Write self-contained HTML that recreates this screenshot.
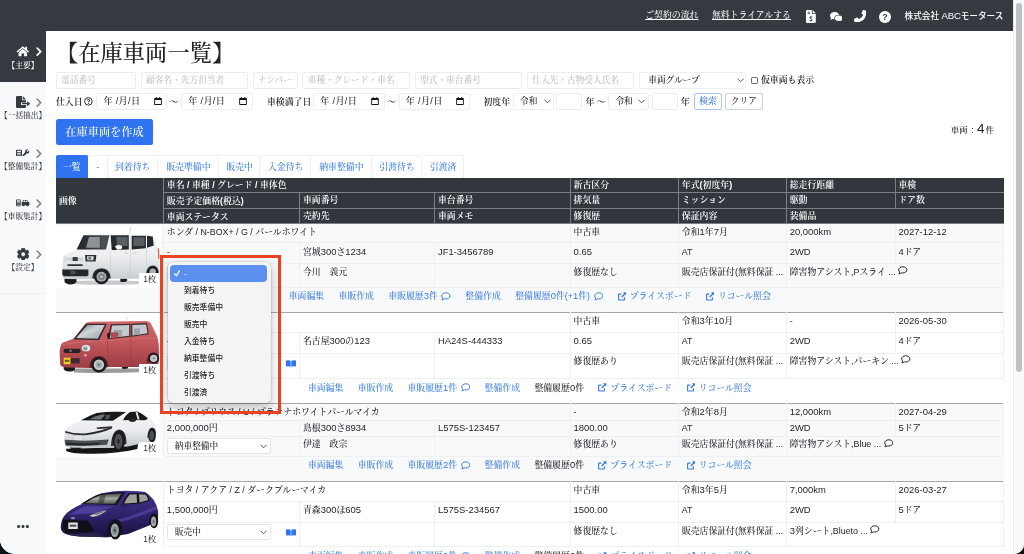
<!DOCTYPE html>
<html lang="ja"><head><meta charset="utf-8"><title>在庫車両一覧</title>
<style>
html,body{margin:0;padding:0}
body{width:1024px;height:554px;overflow:hidden;background:#0a1216;font-family:"Liberation Sans","Noto Serif CJK SC",serif;font-size:9.1px;line-height:13.65px;color:#212529;position:relative;font-weight:500}
*{box-sizing:border-box}
#win{position:absolute;left:0;top:0;width:1024px;height:554px;background:#fff;border-radius:0 0 10px 15px;overflow:hidden}
#lay{position:absolute;left:0;top:0;width:1024px;height:554px;will-change:transform}
.abs{position:absolute}
#hdr{position:absolute;left:0;top:0;width:1013px;height:31px;background:#343a40;color:#fff}
#hdr a{position:absolute;top:9px;color:#fff;text-decoration:underline;font-size:8.9px;line-height:13px;white-space:nowrap}
#hdr .co{position:absolute;top:9.2px;left:904.5px;font-family:"Liberation Sans","Noto Sans CJK JP",sans-serif;font-size:8.65px;line-height:13px;white-space:nowrap;color:#fff}
#hdr svg{position:absolute}
#side{position:absolute;left:0;top:31px;width:46px;height:523px;background:#f8f9fa}
#side .act{position:absolute;left:0;top:0;width:46px;height:50.5px;background:#343a40}
.si{position:absolute;left:0;width:46px;text-align:center;font-size:7.7px;line-height:10px;color:#343a40;white-space:nowrap}
.si.w{color:#fff}
.si svg{position:absolute}
#sb{position:absolute;left:1013px;top:0;width:11px;height:554px;background:#fafafa;border-left:1px solid #e9e9e9}
#sb i{position:absolute;left:2.4px;top:2.7px;width:6px;height:369.3px;border-radius:3px;background:#c1c1c1}
h1{position:absolute;left:55.9px;top:37.2px;margin:0;font-size:22.3px;line-height:34px;font-weight:500;white-space:nowrap;color:#212529}
.inp{position:absolute;height:17.5px;border:1px solid #eaedf0;border-radius:2px;background:#fff;font-size:8.7px;line-height:15.5px;color:#bcc1c6;padding:0 4.5px;white-space:nowrap;overflow:hidden}
.inp.d{color:#212529;border-color:#eceef1}
.inp.dt{font-size:9.1px;letter-spacing:.35px;padding-left:6.2px}
.lbl{position:absolute;white-space:nowrap;font-size:8.9px;line-height:16px;color:#212529;font-weight:600}
.btn{position:absolute;border:1px solid #ccd2d8;border-radius:2px;font-size:8.7px;line-height:14px;text-align:center;height:16.5px;background:#fff}
#mk{position:absolute;left:56px;top:119px;width:97px;height:26px;background:#2f73f0;border-radius:2.5px;color:#fff;font-size:11.2px;line-height:26px;text-align:center}
.tab{position:absolute;top:155px;height:22.5px;border:1px solid #eef0f2;border-left-color:transparent;border-bottom:none;border-radius:2px 2px 0 0;color:#3b7ddd;font-size:8.9px;line-height:22px;text-align:center;background:#fff;white-space:nowrap}
.tab.on{background:#2f73f0;color:#fff;border-color:#2f73f0}
table{position:absolute;left:56px;top:177.6px;width:947.5px;border-collapse:collapse;table-layout:fixed;font-size:8.87px;line-height:12px}
.n{font-size:9.45px}
th,td{padding:0 3px;text-align:left;vertical-align:top;white-space:nowrap;overflow:hidden;border:0.7px solid #eef0f2}
thead th{background:#32373e;color:#fff;font-weight:600;border:0.7px solid #7b8088;font-size:8.9px;padding-top:1.5px;padding-bottom:0}
thead tr:first-child th{border-top:none}
thead th:first-child{border-left:none;vertical-align:middle}
thead th:last-child{border-right:none}
tbody.s td{background:#f8f9fb}
tbody td{padding-top:calc(var(--pt) - 6.3px)}
tbody tr:first-child td{border-top:1px solid #a4a8ad}
tbody tr:nth-child(3) td:first-child{padding-top:1.4px}
td.img{padding:0;position:relative;border-left:none;border-bottom:none}
td.img svg.car{position:absolute;left:0;top:0.5px}
td.lk{text-align:center;border:none;color:#212529;font-size:8.9px;padding-top:2.8px !important}
td.lk a{color:#3b7ddd;text-decoration:none}
td.lk>span,td.lk>a{margin:0 7.15px}
td.lk svg{vertical-align:-1.5px}
td.lk svg.cm{margin-left:1.2px}
.bd{position:absolute;left:82.5px;bottom:-0.3px;width:22.5px;height:14.3px;background:#fff;font-size:8.5px;line-height:13.8px;text-align:center;color:#333}
.sel{display:inline-block;width:104px;height:16.2px;border:1px solid #e2e6ea;border-radius:2px;background:#fff;font-size:8.7px;line-height:14.5px;padding-left:7px;position:relative;vertical-align:top}
.sel svg{position:absolute;right:3px;top:5px}
#red{position:absolute;left:160.2px;top:254.8px;width:121.2px;height:159.3px;border:3.4px solid #e8421f}
#pop{position:absolute;left:168px;top:262px;width:103px;height:140.5px;background:#f4f4f4;border-radius:5px;box-shadow:0 0 0 .5px rgba(0,0,0,.16),0 4px 12px rgba(0,0,0,.26);font-family:"Liberation Sans","Noto Sans CJK JP",sans-serif;font-size:7.8px;line-height:17px;color:#262626}
#pop div{position:absolute;left:16px;white-space:nowrap}
#pop .hi{left:2.2px;top:2.6px;width:97.2px;height:17px;background:#5b90ee;border-radius:4px}
</style></head>
<body><div id="win"><div id="lay">
<div id="hdr"><a style="left:645.2px">ご契約の流れ</a><a style="left:712px">無料トライアルする</a><svg style="position:absolute;left:806.2px;top:9.7px;" width="9.8" height="13" viewBox="0 0 9.8 13"><path fill="#fff" d="M0 1.2 Q0 0 1.2 0 H5.8 V3.2 Q5.8 3.9 6.5 3.9 H9.8 V11.8 Q9.8 13 8.6 13 H1.2 Q0 13 0 11.8z"/><path fill="#fff" d="M6.6 0 L9.8 3.2 H6.6z"/><path fill="#343a40" d="M1.6 1.7 H4 V2.4 H1.6z M1.6 3.3 H4 V4 H1.6z"/><path fill="none" stroke="#343a40" stroke-width="0.9" d="M6.3 7.3 Q4.9 6.6 3.9 7.2 Q3.2 8.2 4.9 8.8 Q6.6 9.3 5.9 10.4 Q4.9 11 3.5 10.3 M4.9 5.9 V6.9 M4.9 10.7 V11.7"/></svg><svg style="position:absolute;left:829.6px;top:11.6px;" width="12.9" height="9.6" viewBox="0 0 12.9 9.6"><ellipse cx="4.6" cy="3.6" rx="4.6" ry="3.6" fill="#fff"/><path fill="#fff" d="M1.2 5.5 L0.3 7.9 L3.4 6.8z"/><ellipse cx="8.6" cy="6.2" rx="4.3" ry="3.3" fill="#343a40"/><ellipse cx="8.6" cy="6.2" rx="3.7" ry="2.8" fill="#fff"/><path fill="#fff" d="M11.2 8 L12.5 9.6 L9.6 8.8z"/></svg><svg style="position:absolute;left:854.2px;top:10px;transform:scaleX(-1) rotate(90deg);" width="12.4" height="12.4" viewBox="0 0 12.4 12.4"><path fill="#fff" d="M11.9 0.6 L9.4 0 Q8.9 -0.1 8.7 0.4 L7.5 3.1 Q7.4 3.5 7.7 3.8 L9.2 5 Q7.9 7.8 5 9.2 L3.8 7.7 Q3.5 7.4 3.1 7.5 L0.4 8.7 Q-0.1 8.9 0 9.4 L0.6 11.9 Q0.7 12.4 1.2 12.4 Q12.4 12.4 12.4 1.2 Q12.4 0.7 11.9 0.6z"/></svg><svg style="position:absolute;left:879.4px;top:10.6px;" width="12" height="12" viewBox="0 0 12 12"><circle cx="6" cy="6" r="6" fill="#fff"/><text x="6" y="9.1" text-anchor="middle" font-family="Liberation Sans,sans-serif" font-weight="700" font-size="8.8" fill="#343a40">?</text></svg><span class="co">株式会社 <span style="font-size:9.6px;letter-spacing:-.15px">ABC</span>モータース</span></div>
<div id="side"><div class="act"></div><svg style="position:absolute;left:16.2px;top:15.3px;" width="13.6" height="10.4" viewBox="0 30 576 470"><path fill="#fff" d="M288 36 L14 262 c-8 7-9 18-2 26 l22 26 c7 8 18 9 26 2 L288 128 l228 188 c8 7 19 6 26-2 l22-26 c7-8 6-19-2-26 L480 194 V72 c0-7-5-12-12-12 h-56 c-7 0-12 5-12 12 v56z"/><path fill="#fff" d="M288 168 L96 326 V480 c0 9 7 16 16 16 h116 V372 h120 v124 h116 c9 0 16-7 16-16 V326z"/></svg><svg style="position:absolute;left:36.3px;top:16.4px;" width="6" height="9.2" viewBox="0 0 6 9.2"><path fill="none" stroke="#fff" stroke-width="1.7" stroke-linecap="round" stroke-linejoin="round" d="M1.2 1.1 L4.7 4.6 L1.2 8.1"/></svg><div class="si w" style="top:29.5px">【主要】</div><svg style="position:absolute;left:16.2px;top:65px;" width="14.4" height="12" viewBox="0 0 14.4 12"><path fill="#343a40" d="M0 1.2 Q0 0 1.2 0 H6 V3.6 Q6 4.2 6.6 4.2 H10 V6.4 H5.6 Q5 6.4 5 7 V8.4 Q5 9 5.6 9 H10 V10.8 Q10 12 8.8 12 H1.2 Q0 12 0 10.8z"/><path fill="#343a40" d="M6.8 0 L10 3.4 H6.8z"/><path fill="#343a40" d="M6 7.1 H11 V5.2 L14.4 7.7 L11 10.2 V8.3 H6z"/></svg><svg style="position:absolute;left:36.3px;top:66.80000000000001px;" width="6" height="9.2" viewBox="0 0 6 9.2"><path fill="none" stroke="#8a8d90" stroke-width="1.7" stroke-linecap="round" stroke-linejoin="round" d="M1.2 1.1 L4.7 4.6 L1.2 8.1"/></svg><div class="si" style="top:79.9px">【一括抽出】</div><svg style="position:absolute;left:16.2px;top:117.7px;" width="13.5" height="7.7" viewBox="0 0 15 8.6"><path fill="#343a40" d="M0.6 0.8 H6 Q6.6 0.8 6.6 1.4 V7.6 Q6.6 8.2 6 8.2 H0.6 Q0 8.2 0 7.6 V1.4 Q0 0.8 0.6 0.8z M1.2 2 V3.6 H5.4 V2z M1.2 4.6 V5.4 H5.4 V4.6z M1.2 6.2 V7 H5.4 V6.2z" fill-rule="evenodd"/><path fill="#343a40" d="M14.6 1.6 L12.9 3.3 L11.8 2.2 L13.5 0.5 Q11.9 0 10.8 1.1 Q9.9 2.1 10.3 3.3 L7.2 6.9 Q6.7 7.6 7.3 8.2 Q7.9 8.7 8.5 8.2 L12 5 Q13.3 5.4 14.2 4.4 Q15.2 3.3 14.6 1.6z"/></svg><svg style="position:absolute;left:36.3px;top:118.30000000000001px;" width="6" height="9.2" viewBox="0 0 6 9.2"><path fill="none" stroke="#8a8d90" stroke-width="1.7" stroke-linecap="round" stroke-linejoin="round" d="M1.2 1.1 L4.7 4.6 L1.2 8.1"/></svg><div class="si" style="top:131.4px">【整備集計】</div><svg style="position:absolute;left:16.2px;top:168.2px;" width="13.5" height="7.7" viewBox="0 0 15 8.6"><path fill="#343a40" d="M0.6 0.6 H4.6 Q5.2 0.6 5.2 1.2 V7.4 Q5.2 8 4.6 8 H0.6 Q0 8 0 7.4 V1.2 Q0 0.6 0.6 0.6z M0.9 1.5 V3 H4.3 V1.5z M0.9 3.8 V4.6 H1.9 V3.8z M2.1 3.8 V4.6 H3.1 V3.8z M3.3 3.8 V4.6 H4.3 V3.8z M0.9 5.2 V6 H1.9 V5.2z M2.1 5.2 V6 H3.1 V5.2z M3.3 5.2 V6 H4.3 V5.2z M0.9 6.6 V7.2 H4.3 V6.6z" fill-rule="evenodd"/><path fill="#343a40" d="M6.2 4.2 Q6.2 3.6 6.9 3.5 L7.8 1.6 Q8.1 1 8.8 1 H11.6 Q12.2 1 12.6 1.5 L13.9 3.4 Q15 3.6 15 4.6 V6.4 Q15 6.9 14.5 6.9 H14.1 A1.3 1.3 0 0 1 11.5 6.9 H9.6 A1.3 1.3 0 0 1 7 6.9 H6.7 Q6.2 6.9 6.2 6.4z M8.1 3.4 H10 V1.8 H8.9z M10.7 3.4 H12.9 L11.8 1.8 H10.7z" fill-rule="evenodd"/><circle fill="#343a40" cx="8.3" cy="7" r="0.95"/><circle fill="#343a40" cx="12.8" cy="7" r="0.95"/></svg><svg style="position:absolute;left:36.3px;top:168.1px;" width="6" height="9.2" viewBox="0 0 6 9.2"><path fill="none" stroke="#8a8d90" stroke-width="1.7" stroke-linecap="round" stroke-linejoin="round" d="M1.2 1.1 L4.7 4.6 L1.2 8.1"/></svg><div class="si" style="top:181.2px">【車販集計】</div><svg style="position:absolute;left:16.8px;top:216.5px;" width="12.4" height="12.4" viewBox="0 0 12.4 12.4"><path fill="#343a40" fill-rule="evenodd" stroke="#343a40" stroke-width="0.6" stroke-linejoin="round" d="M12.15 7.93 L10.68 10.49 L8.97 9.87 L7.99 10.44 L7.67 12.22 L4.73 12.22 L4.41 10.44 L3.43 9.87 L1.72 10.49 L0.25 7.93 L1.64 6.77 L1.64 5.63 L0.25 4.47 L1.72 1.91 L3.43 2.53 L4.41 1.96 L4.73 0.18 L7.67 0.18 L7.99 1.96 L8.97 2.53 L10.68 1.91 L12.15 4.47 L10.76 5.63 L10.76 6.77z M6.2 4 A2.2 2.2 0 1 0 6.2 8.4 A2.2 2.2 0 1 0 6.2 4z"/></svg><svg style="position:absolute;left:36.3px;top:219.20000000000002px;" width="6" height="9.2" viewBox="0 0 6 9.2"><path fill="none" stroke="#8a8d90" stroke-width="1.7" stroke-linecap="round" stroke-linejoin="round" d="M1.2 1.1 L4.7 4.6 L1.2 8.1"/></svg><div class="si" style="top:232.3px">【設定】</div><div class="abs" style="left:0;top:262px;width:46px;height:1px;background:#eef0f2"></div><svg style="position:absolute;left:17.2px;top:493.9px;" width="12" height="3.2" viewBox="0 0 12 3.2"><circle cx="1.6" cy="1.6" r="1.5" fill="#343a40"/><circle cx="6" cy="1.6" r="1.5" fill="#343a40"/><circle cx="10.4" cy="1.6" r="1.5" fill="#343a40"/></svg></div>
<div id="sb"><i></i></div>
<h1>【在庫車両一覧】</h1>
<div class="inp " style="left:55.5px;top:71.5px;width:80.5px">電話番号</div><div class="inp " style="left:140.5px;top:71.5px;width:107px">顧客名・先方担当者</div><div class="inp " style="left:252.5px;top:71.5px;width:45px">ナンバー</div><div class="inp " style="left:302.3px;top:71.5px;width:107.4px">車種・グレード・車名</div><div class="inp " style="left:414.5px;top:71.5px;width:107px">型式・車台番号</div><div class="inp " style="left:526.7px;top:71.5px;width:107px">仕入先・古物受人氏名</div><div class="inp d" style="left:638.6px;top:71.5px;width:107px;padding-left:8.6px">車両グループ</div><svg style="position:absolute;left:736.5px;top:78.2px;" width="7.2" height="5" viewBox="0 0 7.2 5"><path fill="none" stroke="#444" stroke-width="0.9" stroke-linecap="round" stroke-linejoin="round" d="M0.8 1 L3.6 3.8 L6.4 1"/></svg><div class="abs" style="left:751px;top:76.6px;width:7.2px;height:7.2px;border:1px solid #6b6b6b;border-radius:1.2px;background:#fff"></div><div class="lbl" style="left:761px;top:72.3px">仮車両も表示</div>
<div class="lbl" style="left:56px;top:93.5px">仕入日</div><svg style="position:absolute;left:83.8px;top:97.3px;" width="8.8" height="8.8" viewBox="0 0 8.8 8.8"><circle cx="4.4" cy="4.4" r="3.8" fill="none" stroke="#212529" stroke-width="0.95"/><text x="4.4" y="6.7" text-anchor="middle" font-family="Liberation Sans,sans-serif" font-weight="700" font-size="6.4" fill="#212529">?</text></svg><div class="inp d dt" style="left:96.2px;top:92.8px;width:70.9px">年 /月/日</div><svg style="position:absolute;left:153.70000000000002px;top:97.39999999999999px;" width="8" height="8" viewBox="0 0 8 8"><path fill="#111" fill-rule="evenodd" d="M0.9 0.9 H7.1 Q7.8 0.9 7.8 1.6 V7.3 Q7.8 8 7.1 8 H0.9 Q0.2 8 0.2 7.3 V1.6 Q0.2 0.9 0.9 0.9z M1.1 2.9 V7.1 H6.9 V2.9z"/><path fill="#111" d="M1.8 0 H2.7 V1.4 H1.8z M5.3 0 H6.2 V1.4 H5.3z"/></svg><div class="lbl" style="left:169.6px;top:93.5px">～</div><div class="inp d dt" style="left:181px;top:92.8px;width:71.5px">年 /月/日</div><svg style="position:absolute;left:239.1px;top:97.39999999999999px;" width="8" height="8" viewBox="0 0 8 8"><path fill="#111" fill-rule="evenodd" d="M0.9 0.9 H7.1 Q7.8 0.9 7.8 1.6 V7.3 Q7.8 8 7.1 8 H0.9 Q0.2 8 0.2 7.3 V1.6 Q0.2 0.9 0.9 0.9z M1.1 2.9 V7.1 H6.9 V2.9z"/><path fill="#111" d="M1.8 0 H2.7 V1.4 H1.8z M5.3 0 H6.2 V1.4 H5.3z"/></svg><div class="lbl" style="left:267px;top:93.5px">車検満了日</div><div class="inp d dt" style="left:313px;top:92.8px;width:71.8px">年 /月/日</div><svg style="position:absolute;left:371.40000000000003px;top:97.39999999999999px;" width="8" height="8" viewBox="0 0 8 8"><path fill="#111" fill-rule="evenodd" d="M0.9 0.9 H7.1 Q7.8 0.9 7.8 1.6 V7.3 Q7.8 8 7.1 8 H0.9 Q0.2 8 0.2 7.3 V1.6 Q0.2 0.9 0.9 0.9z M1.1 2.9 V7.1 H6.9 V2.9z"/><path fill="#111" d="M1.8 0 H2.7 V1.4 H1.8z M5.3 0 H6.2 V1.4 H5.3z"/></svg><div class="lbl" style="left:387.2px;top:93.5px">～</div><div class="inp d dt" style="left:398.5px;top:92.8px;width:71.3px">年 /月/日</div><svg style="position:absolute;left:456.40000000000003px;top:97.39999999999999px;" width="8" height="8" viewBox="0 0 8 8"><path fill="#111" fill-rule="evenodd" d="M0.9 0.9 H7.1 Q7.8 0.9 7.8 1.6 V7.3 Q7.8 8 7.1 8 H0.9 Q0.2 8 0.2 7.3 V1.6 Q0.2 0.9 0.9 0.9z M1.1 2.9 V7.1 H6.9 V2.9z"/><path fill="#111" d="M1.8 0 H2.7 V1.4 H1.8z M5.3 0 H6.2 V1.4 H5.3z"/></svg><div class="lbl" style="left:483.5px;top:93.5px">初度年</div><div class="inp d" style="left:512.7px;top:92.8px;width:41.3px;padding-left:6.4px">令和</div><svg style="position:absolute;left:543.5px;top:99.39999999999999px;" width="7.2" height="5" viewBox="0 0 7.2 5"><path fill="none" stroke="#444" stroke-width="0.9" stroke-linecap="round" stroke-linejoin="round" d="M0.8 1 L3.6 3.8 L6.4 1"/></svg><div class="inp " style="left:556.4px;top:92.8px;width:26px"></div><div class="lbl" style="left:585.5px;top:93.5px">年 ～</div><div class="inp d" style="left:608px;top:92.8px;width:40.6px;padding-left:6.4px">令和</div><svg style="position:absolute;left:638.3px;top:99.39999999999999px;" width="7.2" height="5" viewBox="0 0 7.2 5"><path fill="none" stroke="#444" stroke-width="0.9" stroke-linecap="round" stroke-linejoin="round" d="M0.8 1 L3.6 3.8 L6.4 1"/></svg><div class="inp " style="left:651.8px;top:92.8px;width:26px"></div><div class="lbl" style="left:680.8px;top:93.5px">年</div><div class="btn" style="left:694px;top:93.2px;width:28px;color:#2f6fdc;border-color:#a9c4f2">検索</div><div class="btn" style="left:725px;top:93.2px;width:37.8px;color:#333">クリア</div>
<div id="mk">在庫車両を作成</div>
<div class="abs" style="right:30.2px;top:119.6px;white-space:nowrap;font-size:8.4px;line-height:17px;color:#212529">車両<span style="margin:0 3.4px 0 3.8px">:</span><span style="font-size:13.6px">4</span><span style="margin-left:0.8px">件</span></div>
<div class="tab on" style="left:55.5px;width:32.5px">一覧</div><div class="tab" style="left:88px;width:19.5px">-</div><div class="tab" style="left:107.5px;width:50.5px">到着待ち</div><div class="tab" style="left:158px;width:60.7px">販売準備中</div><div class="tab" style="left:218.7px;width:41.8px">販売中</div><div class="tab" style="left:260.5px;width:50.5px">入金待ち</div><div class="tab" style="left:311px;width:60.7px">納車整備中</div><div class="tab" style="left:371.7px;width:50.8px">引渡待ち</div><div class="tab" style="left:422.5px;width:41.2px">引渡済</div>
<table><colgroup><col style="width:107.3px"><col style="width:136.2px"><col style="width:135px"><col style="width:135.5px"><col style="width:108.3px"><col style="width:107.9px"><col style="width:108.8px"><col style="width:108.5px"></colgroup>
<thead><tr style="height:14.8px"><th rowspan="3">画像</th><th colspan="3">車名 / 車種 / グレード / 車体色</th><th>新古区分</th><th>年式(初度年)</th><th>総走行距離</th><th>車検</th></tr>
<tr style="height:16.1px"><th>販売予定価格(税込)</th><th>車両番号</th><th>車台番号</th><th>排気量</th><th>ミッション</th><th>駆動</th><th>ドア数</th></tr>
<tr style="height:15.4px"><th>車両ステータス</th><th>売約先</th><th>車両メモ</th><th>修復歴</th><th>保証内容</th><th colspan="2">装備品</th></tr></thead>
<tbody class="s"><tr style="height:18.7px;--pt:8.4px"><td class="img" rowspan="3"><svg class="car" width="105" height="63" viewBox="0 0 105 63" style="display:block;background:#fff">
<defs><linearGradient id="c1b" x1="0" y1="0" x2="0" y2="1"><stop offset="0" stop-color="#f6f7f8"/><stop offset=".5" stop-color="#eceef0"/><stop offset="1" stop-color="#c9ccd1"/></linearGradient>
<linearGradient id="c1w" x1="0" y1="0" x2="1" y2="0"><stop offset="0" stop-color="#202327"/><stop offset="1" stop-color="#4a4e53"/></linearGradient></defs>
<ellipse cx="50" cy="57.6" rx="42" ry="2.2" fill="#c8cacd"/>
<path fill="#1a1b1d" d="M8.5 53.5 H20.5 V57 Q19 59.4 14.5 59.4 Q9.5 59.2 8.5 56.5z M64.3 53.5 H71.1 V56 Q68 57.6 64.3 56.4z"/>
<path fill="url(#c1b)" d="M26.7 9.7 Q28.5 8.4 32 8.4 H93 Q96.6 8.6 97.9 10.4 L102.4 23.9 L103.2 37.5 V47 Q102.8 52 100.5 52.8 L88 53.8 H53 L36 54.2 L9 54 Q6.5 53.4 6.3 50 V43.2 L7 33 Q7.6 30.6 9.5 29.8 L20.5 24.5z"/>
<path fill="#e0553a" d="M101.8 22.8 L103 24 L103.5 34.1 L102.2 33.5z"/>
<path fill="url(#c1w)" d="M27.5 10.2 H53.5 L50 24.5 H20.7z"/>
<path fill="#8e9296" d="M33 12 H43.8 V22.8 H30.1z"/>
<path fill="#4b4f54" d="M45 11.5 H51.5 L49 23 H44.6z"/>
<path fill="#26292d" d="M54.6 10.2 H72.8 V24.5 L55.7 25z M75.7 10.8 H89.9 V23.3 L75.7 24.5z M91 10.8 L96.7 11.4 L97.8 20.5 L91 22.8z"/>
<path fill="#62676d" opacity=".85" d="M60 11.8 H71.6 V21 H61z M77.4 12.2 H88.6 V21 H77.4z"/>
<ellipse cx="62.6" cy="22.3" rx="3.5" ry="2.3" fill="#f8f9fa"/><ellipse cx="58.2" cy="23.6" rx="2.2" ry="1.7" fill="#1c1e21"/>
<path fill="none" stroke="#c3c6cb" stroke-width=".5" d="M54.2 25.5 L54.8 52 M74.3 10.5 V52.5 M90.5 23 V42"/>
<rect x="68" y="27.4" width="4" height="1.3" rx=".6" fill="#d2d5d9"/><rect x="76.6" y="27.2" width="4" height="1.3" rx=".6" fill="#d2d5d9"/>
<path fill="#2b2e32" d="M29 30.1 H40.4 L39.6 36.4 H29.6z"/><path fill="#dfe6ee" d="M31 31.2 H37.8 L37.3 35.2 H31.4z"/><circle cx="33.8" cy="33.2" r="1.6" fill="#6f767e"/>
<rect x="11.4" y="32.4" width="15.9" height="3.4" rx=".8" fill="#cfd2d6"/><rect x="16.6" y="32.1" width="5.2" height="4" rx=".6" fill="#3a3d42"/>
<rect x="8" y="31.5" width="2.6" height="4.6" rx=".8" fill="#dfe3e8" stroke="#aeb2b7" stroke-width=".3"/>
<rect x="11.4" y="39.2" width="15.3" height="1.8" rx=".6" fill="#2e3135"/>
<path fill="#23262a" d="M6.3 44.4 H32.4 V50 Q32 51.2 30 51.2 H8.5 Q6.5 51 6.3 49z"/><rect x="14.5" y="45.6" width="5" height="3.6" fill="#4b4f54"/>
<path fill="#2a2c30" d="M36.2 53.5 Q36.4 43.6 45.5 43.2 Q54.3 43.6 54.8 53.4z"/>
<circle cx="45.5" cy="51.8" r="7.4" fill="#1d1e20"/><circle cx="45.5" cy="51.8" r="5" fill="#a9aeb4"/><circle cx="45.5" cy="51.8" r="3.4" fill="#7d838a"/><circle cx="45.5" cy="51.8" r="1.3" fill="#c3c7cc"/>
<path fill="#2a2c30" d="M90 50 Q90.4 40.8 96.7 40.6 Q102.2 40.9 102.9 48z"/>
<circle cx="96.7" cy="46.6" r="5.1" fill="#1d1e20"/><circle cx="96.7" cy="46.6" r="3.2" fill="#a9aeb4"/>
<path stroke="#9a9ea3" stroke-width=".4" d="M73.6 8.4 L74.6 1.4"/>
</svg><span class="bd">1枚</span></td><td colspan="3">ホンダ / N-BOX+ / G / パールホワイト</td><td>中古車</td><td>令和<span class="n">1</span>年<span class="n">7</span>月</td><td><span class="n">20,000km</span></td><td><span class="n">2027-12-12</span></td></tr>
<tr style="height:20.5px;--pt:9.2px"><td>-</td><td>宮城<span class="n">300</span>さ<span class="n">1234</span></td><td><span class="n">JF1-3456789</span></td><td><span class="n">0.65</span></td><td>AT</td><td><span class="n">2WD</span></td><td><span class="n">4</span>ドア</td></tr>
<tr style="height:24.05px;--pt:8.4px"><td><span class="sel">-<svg width="7.2" height="5" viewBox="0 0 7.2 5"><path fill="none" stroke="#444" stroke-width="0.9" stroke-linecap="round" stroke-linejoin="round" d="M0.8 1 L3.6 3.8 L6.4 1"/></svg></span></td><td>今川　義元</td><td></td><td>修復歴なし</td><td>販売店保証付(無料保証 ...</td><td colspan="2">障害物アシスト,Pスライ ... <svg class="cm" style="position:static;" width="9.6" height="8.6" viewBox="0 0 9.6 8.6"><path fill="none" stroke="#212529" stroke-width="1" d="M4.8 0.8 C2.4 0.8 0.7 2.2 0.7 3.9 C0.7 4.8 1.1 5.5 1.8 6.1 C1.7 6.8 1.3 7.3 0.8 7.8 C1.9 7.8 2.8 7.5 3.5 6.9 C3.9 7 4.3 7 4.8 7 C7.2 7 8.9 5.6 8.9 3.9 C8.9 2.2 7.2 0.8 4.8 0.8z"/></svg></td></tr>
<tr style="height:25.15px"><td class="lk" colspan="8"><a>車両編集</a><a>車販作成</a><a>車販履歴<span class="n">3</span>件 <svg class="cm" style="position:static;" width="9.6" height="8.6" viewBox="0 0 9.6 8.6"><path fill="none" stroke="#3b7ddd" stroke-width="1" d="M4.8 0.8 C2.4 0.8 0.7 2.2 0.7 3.9 C0.7 4.8 1.1 5.5 1.8 6.1 C1.7 6.8 1.3 7.3 0.8 7.8 C1.9 7.8 2.8 7.5 3.5 6.9 C3.9 7 4.3 7 4.8 7 C7.2 7 8.9 5.6 8.9 3.9 C8.9 2.2 7.2 0.8 4.8 0.8z"/></svg></a><a>整備作成</a><a>整備履歴<span class="n">0</span>件(+<span class="n">1</span>件) <svg class="cm" style="position:static;" width="9.6" height="8.6" viewBox="0 0 9.6 8.6"><path fill="none" stroke="#3b7ddd" stroke-width="1" d="M4.8 0.8 C2.4 0.8 0.7 2.2 0.7 3.9 C0.7 4.8 1.1 5.5 1.8 6.1 C1.7 6.8 1.3 7.3 0.8 7.8 C1.9 7.8 2.8 7.5 3.5 6.9 C3.9 7 4.3 7 4.8 7 C7.2 7 8.9 5.6 8.9 3.9 C8.9 2.2 7.2 0.8 4.8 0.8z"/></svg></a><a><svg width="8.6" height="8.6" viewBox="0 0 8.6 8.6" style="margin-right:3.6px"><path fill="none" stroke="#3b7ddd" stroke-width="1.15" stroke-linejoin="round" d="M6.4 5.2 V7.4 Q6.4 8 5.8 8 H1.2 Q0.6 8 0.6 7.4 V2.8 Q0.6 2.2 1.2 2.2 H3.4"/><path fill="#3b7ddd" d="M5 0.2 H8.4 V3.6 L7.2 2.4 L4.2 5.4 L3.2 4.4 L6.2 1.4z"/></svg>プライスボード</a><a><svg width="8.6" height="8.6" viewBox="0 0 8.6 8.6" style="margin-right:3.6px"><path fill="none" stroke="#3b7ddd" stroke-width="1.15" stroke-linejoin="round" d="M6.4 5.2 V7.4 Q6.4 8 5.8 8 H1.2 Q0.6 8 0.6 7.4 V2.8 Q0.6 2.2 1.2 2.2 H3.4"/><path fill="#3b7ddd" d="M5 0.2 H8.4 V3.6 L7.2 2.4 L4.2 5.4 L3.2 4.4 L6.2 1.4z"/></svg>リコール照会</a></td></tr></tbody>
<tbody><tr style="height:20px;--pt:8.1px"><td class="img" rowspan="3"><svg class="car" width="104" height="66" viewBox="0 0 104 66" style="display:block;background:#fff">
<defs><linearGradient id="c2b" x1="0" y1="0" x2="0" y2="1"><stop offset="0" stop-color="#d2686b"/><stop offset=".45" stop-color="#c3575c"/><stop offset="1" stop-color="#9c3c45"/></linearGradient>
<linearGradient id="c2w" x1="0" y1="0" x2="1" y2="1"><stop offset="0" stop-color="#6c747b"/><stop offset=".45" stop-color="#cfd4d8"/><stop offset="1" stop-color="#9aa1a8"/></linearGradient></defs>
<path fill="#9c9c9e" d="M17.9 55.5 H83 V59.2 Q50 60.6 17.9 59.4z"/>
<path fill="#1c1a1c" d="M7.7 53.6 H19 V56.4 Q17.5 58.6 13 58.5 Q8.6 58.3 7.7 56z M66 53.5 H72 V55.2 Q69 56.4 66 55.6z"/>
<path fill="url(#c2b)" d="M29.8 10.1 Q31.5 8.9 35 8.8 L90.5 7.9 Q93.4 8.2 94.6 9.9 L101.3 23.8 Q103.2 31 103 39.3 V47 Q102.6 51.6 100.5 52.6 L88 54 H53 L35 55 L9.5 54.4 Q4.6 53.8 4.2 51.2 L3.6 39.3 Q3.8 32.4 6.6 29.8 L17.9 25.6z"/>
<path fill="#33282c" d="M30 10.7 H51 L43 27.3 L17.3 26.2z"/>
<path fill="url(#c2w)" d="M31.4 12 H48.8 L41.8 25.8 L20.2 25z"/>
<path fill="#3a2e32" d="M54.8 11.3 L74.4 10.7 V23.8 L51.6 26.3z M75.2 10.8 L91 10.1 L92.9 21.2 L75.2 23.8z"/>
<path fill="#c4c9ce" d="M56 12.5 L73.2 12 V22.7 L53.8 24.9z M76.4 12 L90 11.4 L91.6 20.3 L76.4 22.6z"/>
<path fill="#8d949b" opacity=".7" d="M58 17 H66 V23.5 L58 24.3z M78 15.5 H84 V21.7 L78 22.3z"/>
<path fill="#b04a51" stroke="#7f2f38" stroke-width=".4" d="M54.6 19.7 H61.4 Q62.2 20 62 21 L61.4 25.2 L55.4 25.8z"/><ellipse cx="52.6" cy="22.4" rx="1.5" ry="2.8" fill="#231c1f"/>
<path fill="none" stroke="#93363f" stroke-width=".5" d="M51.4 26.6 L52 53 M74.8 10.5 V53"/>
<path fill="none" stroke="#dd8a8a" stroke-width=".6" opacity=".7" d="M7 31.5 Q30 27.6 52 27.4 L101 24.6"/>
<rect x="7.7" y="35.7" width="16.7" height="4.2" rx="1.6" fill="#2a2226"/><circle cx="14.6" cy="37.8" r="1.3" fill="#7d7478"/>
<ellipse cx="30" cy="35.2" rx="4.5" ry="3.6" fill="#e6eaee" stroke="#93404a" stroke-width=".6"/><ellipse cx="29.4" cy="35.4" rx="2.3" ry="2" fill="#9098a0"/>
<circle cx="29.4" cy="42.4" r="1.1" fill="#ead9da"/>
<rect x="14.9" y="45.3" width="8.9" height="5.3" rx="1" fill="#3b2a30"/>
<rect x="7.7" y="44.7" width="6.6" height="6.5" fill="#ecd21a"/><rect x="8.7" y="46.8" width="4.6" height="2.2" fill="#6a6325"/>
<path fill="#5b242b" d="M33.4 54.8 Q33.6 43.4 42.9 43.1 Q51.6 43.5 52.4 54.2z"/>
<circle cx="42.9" cy="51.8" r="7.7" fill="#1e1c1f"/><circle cx="42.9" cy="51.8" r="5.2" fill="#c5c9ce"/><circle cx="42.9" cy="51.8" r="3.2" fill="#a7adb3"/><circle cx="42.9" cy="51.8" r="1.2" fill="#6a7076"/>
<path fill="#5b242b" d="M90.6 50 Q91 39.4 97.7 39.2 Q102.6 39.6 103 46z"/>
<circle cx="97.7" cy="45.3" r="5.4" fill="#1e1c1f"/><circle cx="97.7" cy="45.3" r="3.6" fill="#c5c9ce"/><circle cx="97.7" cy="45.3" r="1" fill="#6a7076"/>
<path stroke="#d3b3b5" stroke-width=".5" d="M69.8 8 L72.4 3"/>
</svg><span class="bd">1枚</span></td><td colspan="3">日産 / モコ / S / ピンク</td><td>中古車</td><td>令和<span class="n">3</span>年<span class="n">10</span>月</td><td>-</td><td><span class="n">2026-05-30</span></td></tr>
<tr style="height:20.8px;--pt:9.0px"><td>-</td><td>名古屋<span class="n">300</span>の<span class="n">123</span></td><td><span class="n">HA24S-444333</span></td><td><span class="n">0.65</span></td><td>AT</td><td><span class="n">2WD</span></td><td><span class="n">4</span>ドア</td></tr>
<tr style="height:25.2px;--pt:7.7px"><td><span class="sel">-<svg width="7.2" height="5" viewBox="0 0 7.2 5"><path fill="none" stroke="#444" stroke-width="0.9" stroke-linecap="round" stroke-linejoin="round" d="M0.8 1 L3.6 3.8 L6.4 1"/></svg></span><svg width="10" height="7" viewBox="0 0 10 7" style="margin-left:15px;margin-top:4.6px;vertical-align:top"><path fill="#2f73f0" d="M0 0.6 Q2.6 -0.2 4.7 0.7 V6.8 Q2.6 6 0 6.6z M10 0.6 Q7.4 -0.2 5.3 0.7 V6.8 Q7.4 6 10 6.6z"/></svg></td><td></td><td></td><td>修復歴あり</td><td>販売店保証付(無料保証 ...</td><td colspan="2">障害物アシスト,パーキン ... <svg class="cm" style="position:static;" width="9.6" height="8.6" viewBox="0 0 9.6 8.6"><path fill="none" stroke="#212529" stroke-width="1" d="M4.8 0.8 C2.4 0.8 0.7 2.2 0.7 3.9 C0.7 4.8 1.1 5.5 1.8 6.1 C1.7 6.8 1.3 7.3 0.8 7.8 C1.9 7.8 2.8 7.5 3.5 6.9 C3.9 7 4.3 7 4.8 7 C7.2 7 8.9 5.6 8.9 3.9 C8.9 2.2 7.2 0.8 4.8 0.8z"/></svg></td></tr>
<tr style="height:25.2px"><td class="lk" colspan="8"><a>車両編集</a><a>車販作成</a><a>車販履歴<span class="n">1</span>件 <svg class="cm" style="position:static;" width="9.6" height="8.6" viewBox="0 0 9.6 8.6"><path fill="none" stroke="#3b7ddd" stroke-width="1" d="M4.8 0.8 C2.4 0.8 0.7 2.2 0.7 3.9 C0.7 4.8 1.1 5.5 1.8 6.1 C1.7 6.8 1.3 7.3 0.8 7.8 C1.9 7.8 2.8 7.5 3.5 6.9 C3.9 7 4.3 7 4.8 7 C7.2 7 8.9 5.6 8.9 3.9 C8.9 2.2 7.2 0.8 4.8 0.8z"/></svg></a><a>整備作成</a><span>整備履歴<span class="n">0</span>件</span><a><svg width="8.6" height="8.6" viewBox="0 0 8.6 8.6" style="margin-right:3.6px"><path fill="none" stroke="#3b7ddd" stroke-width="1.15" stroke-linejoin="round" d="M6.4 5.2 V7.4 Q6.4 8 5.8 8 H1.2 Q0.6 8 0.6 7.4 V2.8 Q0.6 2.2 1.2 2.2 H3.4"/><path fill="#3b7ddd" d="M5 0.2 H8.4 V3.6 L7.2 2.4 L4.2 5.4 L3.2 4.4 L6.2 1.4z"/></svg>プライスボード</a><a><svg width="8.6" height="8.6" viewBox="0 0 8.6 8.6" style="margin-right:3.6px"><path fill="none" stroke="#3b7ddd" stroke-width="1.15" stroke-linejoin="round" d="M6.4 5.2 V7.4 Q6.4 8 5.8 8 H1.2 Q0.6 8 0.6 7.4 V2.8 Q0.6 2.2 1.2 2.2 H3.4"/><path fill="#3b7ddd" d="M5 0.2 H8.4 V3.6 L7.2 2.4 L4.2 5.4 L3.2 4.4 L6.2 1.4z"/></svg>リコール照会</a></td></tr></tbody>
<tbody class="s"><tr style="height:17.1px;--pt:8.3px"><td class="img" rowspan="3"><svg class="car" width="104" height="52" viewBox="0 0 104 52" style="display:block;background:#fff">
<defs><linearGradient id="c3b" x1="0" y1="0" x2="0" y2="1"><stop offset="0" stop-color="#f7f8f9"/><stop offset=".55" stop-color="#e9ebee"/><stop offset="1" stop-color="#bfc3c9"/></linearGradient></defs>
<path fill="#141516" d="M10.2 44.8 L60 43.5 L70 38.6 L82.3 38.6 L81.3 45 Q60 50.2 32 49.8 Q14 49.4 10.2 47z"/>
<path fill="#1b1c1e" d="M14.2 41 H25.4 V44.4 Q20 46.6 14.2 44.6z"/>
<path fill="url(#c3b)" d="M9.1 26.4 Q13 21.5 24.9 16.8 Q36 9.6 43 8 Q55 5.9 66 6.1 Q75 6.2 79.2 6.6 Q86.5 9 91.4 13.2 Q96.5 16.4 99 20.3 Q100.4 24 100 27.4 Q99.6 33 97.5 36.6 L90 38.4 L72 42.4 L54 43.8 H16 Q9.2 43.2 8.6 40.6 L8.4 31z"/>
<path fill="#17191b" d="M24.9 16.3 Q35 10.8 40.6 8.9 Q55 7.2 70.1 8.1 L56.9 16.8z"/>
<path fill="#8f9499" opacity=".75" d="M33.5 15.3 Q40 11.8 46 10.6 L49.5 10.4 L45 15.6z"/><path fill="#7b8086" opacity=".6" d="M50.2 11 L54.5 10.8 L53 14.8 L49 15z"/>
<path fill="#17191b" d="M67 16.3 Q70 10.6 74.1 8.1 L81.3 7.6 Q87.5 10.2 91.9 14.2 Q90.5 16 88.4 16.3 Q78 15.6 67 16.3z"/>
<path fill="#e8eaed" d="M79.6 8.2 L81.4 8 L83.6 15.6 L81.6 15.6z"/>
<ellipse cx="76.4" cy="15.8" rx="3.7" ry="2.1" fill="#222426"/>
<path fill="#26282b" d="M9.1 26.9 Q20 30.4 30.5 29.3 Q45 27.4 56.4 22.3 L55.8 24.6 Q45 29.6 31 31 Q19 32 9.3 28.8z"/>
<path fill="#33363a" d="M40.6 23.4 Q50 22.6 55.9 22.3 L54.6 24 Q48 25.2 41 25.1z"/>
<rect x="17.3" y="31.5" width="9.6" height="5.6" fill="#e3e5e8" stroke="#a9adb2" stroke-width=".4"/>
<path fill="#4a4d51" d="M8.6 35.8 Q30 37.6 52.8 35.5 L51 40.8 Q30 42.6 9.6 41.4z"/><path fill="#222427" d="M10 38.6 Q30 40.2 44 38.8 L43 40.6 Q28 41.8 10.4 40.8z"/>
<path fill="#2a2c2f" d="M55 42 Q55.6 26.4 63.4 25.6 Q70.6 26.6 70.4 40z"/>
<ellipse cx="63" cy="37.1" rx="5.9" ry="10.2" fill="#18191b"/><ellipse cx="62.5" cy="37.3" rx="4" ry="7.6" fill="#4d5155"/><ellipse cx="62.5" cy="37.3" rx="1.2" ry="2.2" fill="#202224"/>
<path fill="#2a2c2f" d="M91.4 34 Q91.8 23.6 96.2 23.4 Q100.2 24 99.8 30z"/>
<ellipse cx="96" cy="31.5" rx="3.8" ry="7" fill="#18191b"/><ellipse cx="95.7" cy="31.6" rx="2.3" ry="4.9" fill="#4d5155"/>
</svg><span class="bd">1枚</span></td><td colspan="3">トヨタ / プリウス / U / プラチナホワイトパールマイカ</td><td>-</td><td>令和<span class="n">2</span>年<span class="n">8</span>月</td><td><span class="n">12,000km</span></td><td><span class="n">2027-04-29</span></td></tr>
<tr style="height:15.7px;--pt:7.4px"><td><span class="n">2,000,000</span>円</td><td>島根<span class="n">300</span>さ<span class="n">8934</span></td><td><span class="n">L575S-123457</span></td><td><span class="n">1800.00</span></td><td>AT</td><td><span class="n">2WD</span></td><td><span class="n">5</span>ドア</td></tr>
<tr style="height:19.8px;--pt:8.0px"><td><span class="sel">納車整備中<svg width="7.2" height="5" viewBox="0 0 7.2 5"><path fill="none" stroke="#444" stroke-width="0.9" stroke-linecap="round" stroke-linejoin="round" d="M0.8 1 L3.6 3.8 L6.4 1"/></svg></span></td><td>伊達　政宗</td><td></td><td>修復歴あり</td><td>販売店保証付(無料保証 ...</td><td colspan="2">障害物アシスト,Blue ... <svg class="cm" style="position:static;" width="9.6" height="8.6" viewBox="0 0 9.6 8.6"><path fill="none" stroke="#212529" stroke-width="1" d="M4.8 0.8 C2.4 0.8 0.7 2.2 0.7 3.9 C0.7 4.8 1.1 5.5 1.8 6.1 C1.7 6.8 1.3 7.3 0.8 7.8 C1.9 7.8 2.8 7.5 3.5 6.9 C3.9 7 4.3 7 4.8 7 C7.2 7 8.9 5.6 8.9 3.9 C8.9 2.2 7.2 0.8 4.8 0.8z"/></svg></td></tr>
<tr style="height:25.1px"><td class="lk" colspan="8"><a>車両編集</a><a>車販作成</a><a>車販履歴<span class="n">2</span>件 <svg class="cm" style="position:static;" width="9.6" height="8.6" viewBox="0 0 9.6 8.6"><path fill="none" stroke="#3b7ddd" stroke-width="1" d="M4.8 0.8 C2.4 0.8 0.7 2.2 0.7 3.9 C0.7 4.8 1.1 5.5 1.8 6.1 C1.7 6.8 1.3 7.3 0.8 7.8 C1.9 7.8 2.8 7.5 3.5 6.9 C3.9 7 4.3 7 4.8 7 C7.2 7 8.9 5.6 8.9 3.9 C8.9 2.2 7.2 0.8 4.8 0.8z"/></svg></a><a>整備作成</a><span>整備履歴<span class="n">0</span>件</span><a><svg width="8.6" height="8.6" viewBox="0 0 8.6 8.6" style="margin-right:3.6px"><path fill="none" stroke="#3b7ddd" stroke-width="1.15" stroke-linejoin="round" d="M6.4 5.2 V7.4 Q6.4 8 5.8 8 H1.2 Q0.6 8 0.6 7.4 V2.8 Q0.6 2.2 1.2 2.2 H3.4"/><path fill="#3b7ddd" d="M5 0.2 H8.4 V3.6 L7.2 2.4 L4.2 5.4 L3.2 4.4 L6.2 1.4z"/></svg>プライスボード</a><a><svg width="8.6" height="8.6" viewBox="0 0 8.6 8.6" style="margin-right:3.6px"><path fill="none" stroke="#3b7ddd" stroke-width="1.15" stroke-linejoin="round" d="M6.4 5.2 V7.4 Q6.4 8 5.8 8 H1.2 Q0.6 8 0.6 7.4 V2.8 Q0.6 2.2 1.2 2.2 H3.4"/><path fill="#3b7ddd" d="M5 0.2 H8.4 V3.6 L7.2 2.4 L4.2 5.4 L3.2 4.4 L6.2 1.4z"/></svg>リコール照会</a></td></tr></tbody>
<tbody><tr style="height:20.8px;--pt:8.7px"><td class="img" rowspan="3"><svg class="car" width="104" height="65" viewBox="0 0 104 65" style="display:block;background:#fff">
<defs><linearGradient id="c4b" x1="0" y1="0" x2="0" y2="1"><stop offset="0" stop-color="#43318a"/><stop offset=".45" stop-color="#33246f"/><stop offset="1" stop-color="#1a113e"/></linearGradient>
<linearGradient id="c4w" x1="0" y1="0" x2="0" y2="1"><stop offset="0" stop-color="#3f4340"/><stop offset=".5" stop-color="#a3a89e"/><stop offset="1" stop-color="#5a5f57"/></linearGradient></defs>
<path fill="url(#c4b)" d="M8.2 34 Q12 28.4 25.2 22.3 Q38 13.4 45.8 11.2 Q58 8.8 70.4 8.8 Q82 9 89.2 10 Q94 13 97.4 17.6 Q101 23 102.1 29.3 Q102.6 35.5 101 39.9 L92 44 L72 52 L52 55.2 L23.5 54.6 Q10 53 7 50.5 Q4.8 48.5 4.7 45.8 Q5 38 8.2 34z"/>
<path fill="#171322" d="M25.2 21.7 Q37 14 45.2 11.7 Q58 9.6 69.3 10 L61 22.9z"/>
<path fill="url(#c4w)" d="M29 21.2 Q39 14.8 46 12.8 L65.6 11.2 L58.6 21.8z"/>
<path fill="#2b2d2f" opacity=".55" d="M44 13.5 L50 12.8 L47.5 21.4 L42 21.3z"/>
<path fill="#171322" d="M65.7 22.9 Q68.5 15 72.8 11.2 Q83 10.8 90.4 11.7 Q93 14.5 93.9 18.8 Q88 20.6 82.2 21.7 Q74 22 65.7 22.9z"/>
<path fill="#a2a398" d="M68 21.6 Q70.4 15.8 73.8 12.5 L80.6 12.3 L81 20.8z M83 12.3 Q87 12.3 89.6 12.8 Q91.5 15 92.2 18 L83.6 20.4z"/>
<path fill="#5644a6" opacity=".8" d="M13 33 Q22 26.8 30 24.2 L58 24.6 Q46 27.4 40 31.6 Q27 31 13 33z"/>
<path fill="#5f4db2" opacity=".55" d="M60 38 Q80 33 100 24 L100.6 27 Q82 36 61 41z"/>
<path fill="#d0d5da" stroke="#20164a" stroke-width=".5" d="M51.6 27.8 Q44 29 33.2 33.6 Q34 35.4 38 35 Q46 33.4 51.6 27.8z"/><path fill="#4c5157" d="M48 29.2 Q43 30.4 37.6 33 Q42 33.2 48 29.2z"/>
<ellipse cx="67.8" cy="23.6" rx="3.9" ry="1.9" fill="#2a1e5c"/>
<path fill="#111018" d="M7 37.6 L31.7 38.7 L38.7 49.3 Q24 51.6 9.4 50.5 Q6 46 7 37.6z"/>
<path fill="#2c2447" d="M9 51.4 Q24 52.6 40 50.4 L50.5 55.2 L23.5 54.6 Q13 53.6 9 51.4z"/>
<rect x="12.3" y="40.5" width="9.4" height="6.5" fill="#e4e5e7"/><rect x="13.8" y="42.6" width="6.4" height="2.2" fill="#50535a"/>
<ellipse cx="17" cy="36.2" rx="2.2" ry="1.1" fill="#8b85a8"/>
<path fill="#15102c" d="M50.6 54 Q51.2 37.6 59.6 37 Q67 38 66.6 50z"/>
<ellipse cx="59.3" cy="48.1" rx="6" ry="9.4" fill="#121116"/><ellipse cx="58.8" cy="48.3" rx="4" ry="6.9" fill="#a3a9ae"/><ellipse cx="58.8" cy="48.3" rx="2.4" ry="4.3" fill="#7f868c"/><ellipse cx="58.8" cy="48.3" rx="0.9" ry="1.5" fill="#3a3e44"/>
<path fill="#15102c" d="M93 42 Q93.4 31.4 98.2 31.2 Q102.4 32 102 38z"/>
<ellipse cx="98" cy="39.3" rx="4.1" ry="7" fill="#121116"/><ellipse cx="97.6" cy="39.4" rx="2.6" ry="5" fill="#a3a9ae"/><ellipse cx="97.6" cy="39.4" rx="1" ry="2" fill="#6f757b"/>
</svg><span class="bd">1枚</span></td><td colspan="3">トヨタ / アクア / Z / ダークブルーマイカ</td><td>中古車</td><td>令和<span class="n">3</span>年<span class="n">5</span>月</td><td><span class="n">7,000km</span></td><td><span class="n">2026-03-27</span></td></tr>
<tr style="height:20.2px;--pt:8.2px"><td><span class="n">1,500,000</span>円</td><td>青森<span class="n">300</span>ほ<span class="n">605</span></td><td><span class="n">L575S-234567</span></td><td><span class="n">1500.00</span></td><td>AT</td><td><span class="n">2WD</span></td><td><span class="n">5</span>ドア</td></tr>
<tr style="height:24.5px;--pt:8.3px"><td><span class="sel">販売中<svg width="7.2" height="5" viewBox="0 0 7.2 5"><path fill="none" stroke="#444" stroke-width="0.9" stroke-linecap="round" stroke-linejoin="round" d="M0.8 1 L3.6 3.8 L6.4 1"/></svg></span><svg width="10" height="7" viewBox="0 0 10 7" style="margin-left:15px;margin-top:4.6px;vertical-align:top"><path fill="#2f73f0" d="M0 0.6 Q2.6 -0.2 4.7 0.7 V6.8 Q2.6 6 0 6.6z M10 0.6 Q7.4 -0.2 5.3 0.7 V6.8 Q7.4 6 10 6.6z"/></svg></td><td></td><td></td><td>修復歴なし</td><td>販売店保証付(無料保証 ...</td><td colspan="2"><span class="n">3</span>列シート,Blueto ... <svg class="cm" style="position:static;" width="9.6" height="8.6" viewBox="0 0 9.6 8.6"><path fill="none" stroke="#212529" stroke-width="1" d="M4.8 0.8 C2.4 0.8 0.7 2.2 0.7 3.9 C0.7 4.8 1.1 5.5 1.8 6.1 C1.7 6.8 1.3 7.3 0.8 7.8 C1.9 7.8 2.8 7.5 3.5 6.9 C3.9 7 4.3 7 4.8 7 C7.2 7 8.9 5.6 8.9 3.9 C8.9 2.2 7.2 0.8 4.8 0.8z"/></svg></td></tr>
<tr style="height:24.5px"><td class="lk" colspan="8"><a>車両編集</a><a>車販作成</a><a>車販履歴<span class="n">0</span>件 <svg class="cm" style="position:static;" width="9.6" height="8.6" viewBox="0 0 9.6 8.6"><path fill="none" stroke="#3b7ddd" stroke-width="1" d="M4.8 0.8 C2.4 0.8 0.7 2.2 0.7 3.9 C0.7 4.8 1.1 5.5 1.8 6.1 C1.7 6.8 1.3 7.3 0.8 7.8 C1.9 7.8 2.8 7.5 3.5 6.9 C3.9 7 4.3 7 4.8 7 C7.2 7 8.9 5.6 8.9 3.9 C8.9 2.2 7.2 0.8 4.8 0.8z"/></svg></a><a>整備作成</a><span>整備履歴<span class="n">0</span>件</span><a><svg width="8.6" height="8.6" viewBox="0 0 8.6 8.6" style="margin-right:3.6px"><path fill="none" stroke="#3b7ddd" stroke-width="1.15" stroke-linejoin="round" d="M6.4 5.2 V7.4 Q6.4 8 5.8 8 H1.2 Q0.6 8 0.6 7.4 V2.8 Q0.6 2.2 1.2 2.2 H3.4"/><path fill="#3b7ddd" d="M5 0.2 H8.4 V3.6 L7.2 2.4 L4.2 5.4 L3.2 4.4 L6.2 1.4z"/></svg>プライスボード</a><a><svg width="8.6" height="8.6" viewBox="0 0 8.6 8.6" style="margin-right:3.6px"><path fill="none" stroke="#3b7ddd" stroke-width="1.15" stroke-linejoin="round" d="M6.4 5.2 V7.4 Q6.4 8 5.8 8 H1.2 Q0.6 8 0.6 7.4 V2.8 Q0.6 2.2 1.2 2.2 H3.4"/><path fill="#3b7ddd" d="M5 0.2 H8.4 V3.6 L7.2 2.4 L4.2 5.4 L3.2 4.4 L6.2 1.4z"/></svg>リコール照会</a></td></tr></tbody>
</table>
<div id="pop"><div class="hi"></div><svg style="position:absolute;left:6.4px;top:8px;" width="6.2" height="6.6" viewBox="0 0 6.2 6.6"><path fill="none" stroke="#fff" stroke-width="1.3" stroke-linecap="round" stroke-linejoin="round" d="M0.8 3.8 L2.5 5.8 L5.4 0.8"/></svg><div style="top:2.6px;color:#fff">-</div><div style="top:19.70px">到着待ち</div><div style="top:36.75px">販売準備中</div><div style="top:53.80px">販売中</div><div style="top:70.85px">入金待ち</div><div style="top:87.90px">納車整備中</div><div style="top:104.95px">引渡待ち</div><div style="top:122.00px">引渡済</div></div>
<div id="red"></div>
</div></div></body></html>
